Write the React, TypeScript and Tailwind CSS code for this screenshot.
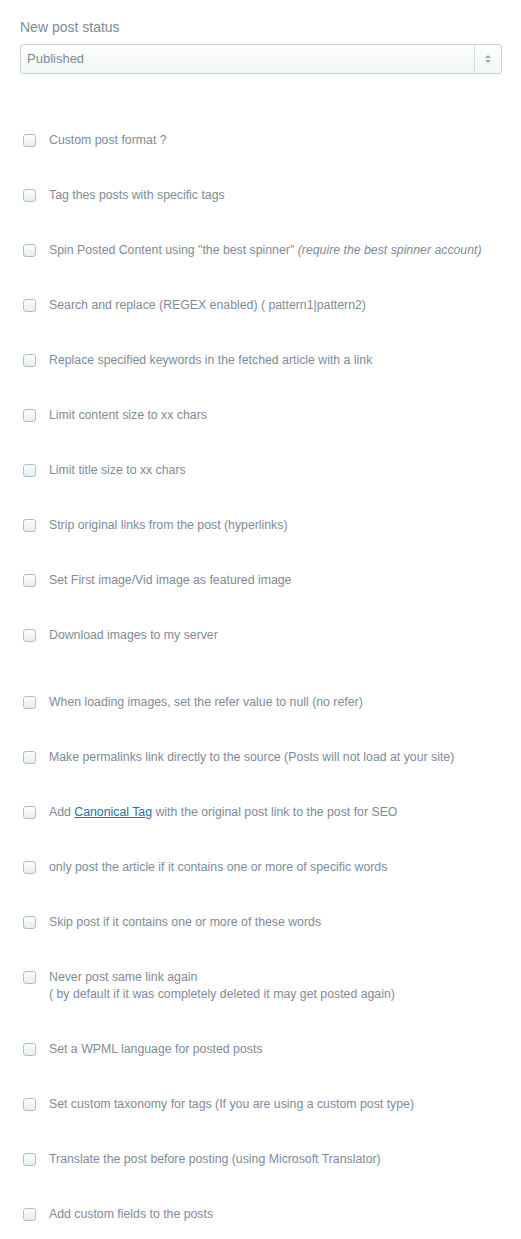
import type { ReactNode } from 'react';

type Option = {
  label: ReactNode;
  extra?: string;
  gapBefore?: boolean;
};

const OPTIONS: Option[] = [
  { label: 'Custom post format ?' },
  { label: 'Tag thes posts with specific tags' },
  {
    label: (
      <>
        Spin Posted Content using "the best spinner" <em>(require the best spinner account)</em>
      </>
    ),
  },
  { label: 'Search and replace (REGEX enabled) ( pattern1|pattern2)' },
  { label: 'Replace specified keywords in the fetched article with a link' },
  { label: 'Limit content size to xx chars' },
  { label: 'Limit title size to xx chars' },
  { label: 'Strip original links from the post (hyperlinks)' },
  { label: 'Set First image/Vid image as featured image' },
  { label: 'Download images to my server' },
  { label: 'When loading images, set the refer value to null (no refer)', gapBefore: true },
  { label: 'Make permalinks link directly to the source (Posts will not load at your site)' },
  {
    label: (
      <>
        Add{' '}
        <a href="#" className="text-[#1e73a8] underline">
          Canonical Tag
        </a>{' '}
        with the original post link to the post for SEO
      </>
    ),
  },
  { label: 'only post the article if it contains one or more of specific words' },
  { label: 'Skip post if it contains one or more of these words' },
  {
    label: 'Never post same link again',
    extra: '( by default if it was completely deleted it may get posted again)',
  },
  { label: 'Set a WPML language for posted posts' },
  { label: 'Set custom taxonomy for tags (If you are using a custom post type)' },
  { label: 'Translate the post before posting (using Microsoft Translator)' },
  { label: 'Add custom fields to the posts' },
];

export default function App() {
  return (
    <div className="min-h-[1239px] w-[521px] bg-white px-[20px] pt-[17px] font-['Liberation_Sans',Arial,sans-serif] text-[#7e8c99]">
      {/* Estado del post */}
      <div className="text-[14px] leading-[20px]">New post status</div>
      <div className="mt-[7px] flex h-[30px] w-[482px] rounded-[3px] border border-[#c3d3da] bg-gradient-to-b from-white to-[#f2f5f6]">
        <div className="flex flex-1 items-center pl-[6px] text-[13px]">Published</div>
        <div className="flex w-[27px] flex-col items-center justify-center gap-[2px] border-l border-[#d3dfe4]">
          <span className="h-0 w-0 border-x-[3px] border-b-[3px] border-x-transparent border-b-[#9aa6ae]" />
          <span className="h-0 w-0 border-x-[3px] border-t-[3px] border-x-transparent border-t-[#9aa6ae]" />
        </div>
      </div>

      {/* Opciones */}
      <div className="mt-[58px]">
        {OPTIONS.map((opt, i) => (
          <label
            key={i}
            className={`flex cursor-pointer items-start text-[12.3px] leading-[17px] ${
              opt.extra ? 'h-[72px]' : 'h-[55px]'
            } ${opt.gapBefore ? 'mt-[12px]' : ''}`}
          >
            <span className="ml-[3px] mt-[2px] h-[13px] w-[13px] shrink-0 rounded-[3px] border border-[#a9c1cc] bg-gradient-to-b from-white to-[#e6edf1]" />
            <span className="ml-[13px]">
              {opt.label}
              {opt.extra && (
                <>
                  <br />
                  {opt.extra}
                </>
              )}
            </span>
          </label>
        ))}
      </div>
    </div>
  );
}
